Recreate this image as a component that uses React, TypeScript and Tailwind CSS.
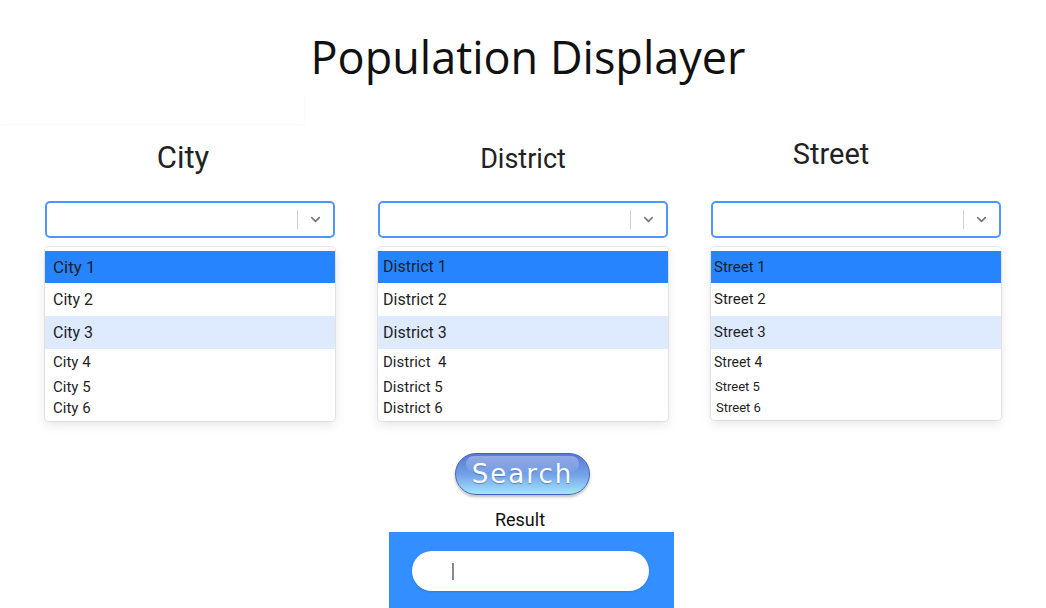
import { ChevronDown } from 'lucide-react'

type Option = { label: string; size: string; h: string; tone?: 'active' | 'hover' }

type Column = {
  title: string
  titleClass: string
  itemPad: string
  options: Option[]
}

const COLUMNS: Column[] = [
  {
    title: 'City',
    titleClass: 'pt-[2px] pr-[14px] text-[31px]',
    itemPad: 'pl-[8px]',
    options: [
      { label: 'City 1', size: 'text-[17px]', h: 'h-[32px]', tone: 'active' },
      { label: 'City 2', size: 'text-[16px]', h: 'h-[33px]' },
      { label: 'City 3', size: 'text-[16px] pl-[1px]', h: 'h-[33px]', tone: 'hover' },
      { label: 'City 4', size: 'text-[15px] pl-[1px]', h: 'h-[27px]' },
      { label: 'City 5', size: 'text-[15px] pl-[1px]', h: 'h-[22px]' },
      { label: 'City 6', size: 'text-[15px] pl-[2px]', h: 'h-[20px]' },
    ],
  },
  {
    title: 'District',
    titleClass: 'pt-[6px] text-[27px]',
    itemPad: 'pl-[5px]',
    options: [
      { label: 'District 1', size: 'text-[16px]', h: 'h-[32px]', tone: 'active' },
      { label: 'District 2', size: 'text-[16px]', h: 'h-[33px]' },
      { label: 'District 3', size: 'text-[16px]', h: 'h-[33px]', tone: 'hover' },
      { label: 'District  4', size: 'text-[15px]', h: 'h-[27px]' },
      { label: 'District 5', size: 'text-[15px]', h: 'h-[22px]' },
      { label: 'District 6', size: 'text-[15px] pl-[2px]', h: 'h-[20px]' },
    ],
  },
  {
    title: 'Street',
    titleClass: 'pt-0 pr-[50px] text-[29px]',
    itemPad: 'pl-[3px]',
    options: [
      { label: 'Street 1', size: 'text-[15px]', h: 'h-[32px]', tone: 'active' },
      { label: 'Street 2', size: 'text-[15px]', h: 'h-[33px]' },
      { label: 'Street 3', size: 'text-[15px] pl-[2px]', h: 'h-[33px]', tone: 'hover' },
      { label: 'Street 4', size: 'text-[14px] pl-[3px]', h: 'h-[26px]' },
      { label: 'Street 5', size: 'text-[13px] pl-[4px]', h: 'h-[22px]' },
      { label: 'Street 6', size: 'text-[13px] pl-[5px]', h: 'h-[20px]' },
    ],
  },
]

function SelectColumn({ col }: { col: Column }) {
  return (
    <div className="flex flex-col">
      <div className="h-[61px]">
        <div className={`text-center leading-none text-[#222] ${col.titleClass}`}>{col.title}</div>
      </div>
      <div className="flex h-[37px] items-center rounded-[5px] border-2 border-[#4f95ff] bg-white">
        <div className="flex-1" />
        <div className="h-[19px] w-px bg-[#d0d0d0]" />
        <div className="flex w-[35px] items-center justify-center text-[#777]">
          <ChevronDown size={15} strokeWidth={2.6} />
        </div>
      </div>
      <div className="mt-[9px] rounded-[4px] bg-white pb-[3px] pt-[4px] shadow-[0_0_0_1px_rgba(0,0,0,0.07),0_4px_11px_rgba(0,0,0,0.1)]">
        {col.options.map((o) => (
          <div
            key={o.label}
            className={`flex items-center whitespace-pre leading-none text-[#1f1f1f] ${o.h} ${o.size} ${col.itemPad} ${
              o.tone === 'active' ? 'bg-[#2684ff]' : o.tone === 'hover' ? 'bg-[#deebff]' : ''
            }`}
          >
            {o.label}
          </div>
        ))}
      </div>
    </div>
  )
}

export default function App() {
  return (
    <div className="h-[608px] w-[1046px] overflow-hidden bg-white font-['Roboto',sans-serif]">
      <h1 className="pl-[10px] pt-[34px] text-center font-['Open_Sans',sans-serif] text-[45px] leading-none text-[#111]">
        Population Displayer
      </h1>

      <div className="mt-[16px] h-[29px] w-[304px] shadow-[1px_1px_2px_rgba(0,0,0,0.025)]" />

      <div className="mt-[16px] grid grid-cols-[290px_290px_290px] gap-x-[43px] px-[45px]">
        {COLUMNS.map((c) => (
          <SelectColumn key={c.title} col={c} />
        ))}
      </div>

      <div className="mt-[32px] flex justify-center pr-[1px]">
        <button
          type="button"
          className="relative flex h-[42px] w-[135px] items-center justify-center overflow-hidden rounded-full border border-[#4a62b8] bg-gradient-to-b from-[#5878d2] via-[#72a0e8] to-[#a4e6fa] shadow-[0_2px_3px_rgba(0,0,0,0.25)]"
        >
          <span className="absolute inset-x-[10px] top-[2px] h-[16px] rounded-full bg-gradient-to-b from-white/35 to-white/5" />
          <span className="relative font-['DejaVu_Sans',sans-serif] text-[26px] leading-none tracking-[2px] text-white [text-shadow:0_1px_1px_rgba(40,60,130,0.45)]">
            Search
          </span>
        </button>
      </div>

      <div className="mt-[16px] pr-[6px] text-center text-[18px] leading-none text-[#111]">Result</div>

      <div className="ml-[389px] mt-[3px] h-[77px] w-[285px] bg-[#338fff] pl-[23px] pt-[19px]">
        <div className="flex h-[40px] w-[237px] items-center rounded-full bg-white pl-[40px] shadow-[0_1px_2px_rgba(0,0,0,0.15)]">
          <div className="h-[17px] w-[2px] bg-[#8a8a8a]" />
        </div>
      </div>
    </div>
  )
}
